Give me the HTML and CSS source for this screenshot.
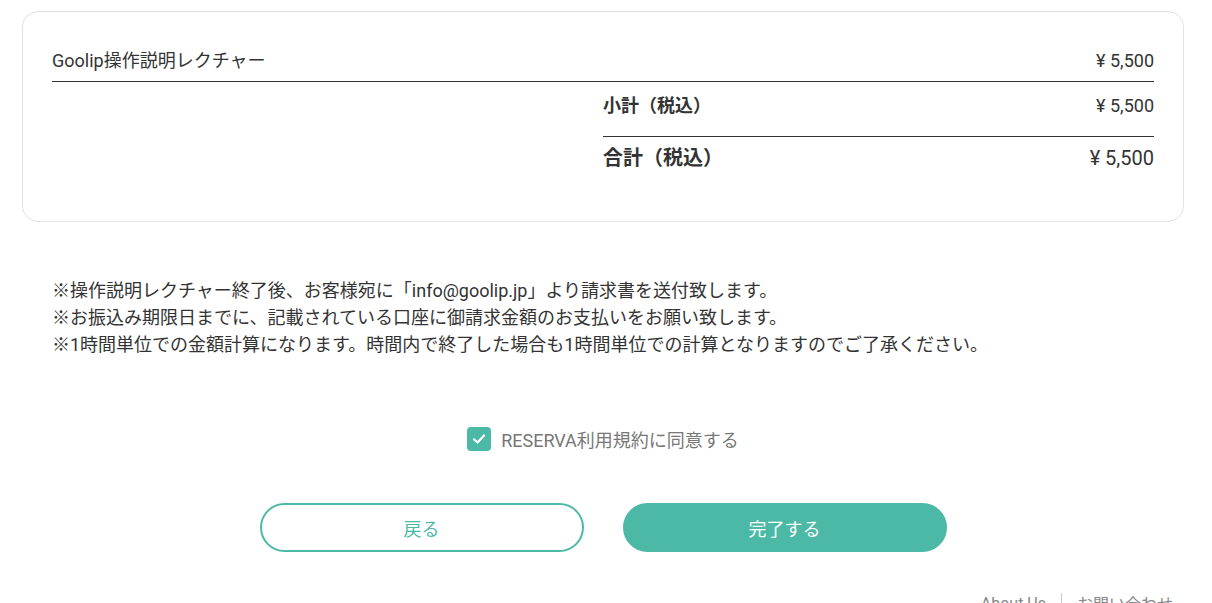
FILE: index.html
```html
<!DOCTYPE html>
<html lang="ja">
<head>
  <meta charset="UTF-8">
  <meta name="viewport" content="width=device-width, initial-scale=1.0">
  <title>予約確認</title>
  <link rel="stylesheet" href="styles.css">
</head>
<body>
<div class="page">
  <div class="card">
    <div class="item-row">
      <span>Goolip操作説明レクチャー</span>
      <span>¥ 5,500</span>
    </div>
    <div class="summary">
      <div class="sub-row">
        <span class="label">小計（税込）</span>
        <span>¥ 5,500</span>
      </div>
      <div class="total-row">
        <span class="label">合計（税込）</span>
        <span>¥ 5,500</span>
      </div>
    </div>
  </div>

  <div class="notes">
    <p>※操作説明レクチャー終了後、お客様宛に「info@goolip.jp」より請求書を送付致します。</p>
    <p>※お振込み期限日までに、記載されている口座に御請求金額のお支払いをお願い致します。</p>
    <p>※1時間単位での金額計算になります。時間内で終了した場合も1時間単位での計算となりますのでご了承ください。</p>
  </div>

  <label class="agree">
    <span class="check">
      <svg width="16" height="16" viewBox="0 0 16 16"><path d="M3 8.3 L6.5 11.5 L13 4.5" fill="none" stroke="#fff" stroke-width="2.2" stroke-linecap="round" stroke-linejoin="round"/></svg>
    </span>
    <span>RESERVA利用規約に同意する</span>
  </label>

  <div class="buttons">
    <button class="btn btn-back">戻る</button>
    <button class="btn btn-done">完了する</button>
  </div>

  <div class="footer">
    <a href="#">About Us</a>
    <span class="sep"></span>
    <a href="#">お問い合わせ</a>
  </div>
</div>
</body>
</html>
```

FILE: styles.css
```css
body {
  margin: 0;
  font-family: Roboto, "Noto Sans CJK JP", sans-serif;
  color: #333;
  background: #fff;
}
.page {
  padding: 11px 28px 0 22px;
}
.card {
  border: 1px solid #e2e2e2;
  border-radius: 16px;
  padding: 37px 29px 50px 29px;
}
.item-row, .sub-row, .total-row {
  display: flex;
  justify-content: space-between;
  font-size: 18px;
  line-height: 24px;
}
.item-row {
  padding-bottom: 8px;
  border-bottom: 1px solid #333;
}
.summary {
  width: 50%;
  margin-left: auto;
}
.sub-row {
  padding: 12px 0 18px;
  border-bottom: 1px solid #333;
}
.total-row {
  padding-top: 8px;
  font-size: 20px;
  line-height: 26px;
}
.label {
  font-weight: bold;
}
.notes {
  margin-top: 55px;
  padding-left: 30px;
  font-size: 18px;
  line-height: 27px;
}
.notes p {
  margin: 0;
}
.agree {
  display: flex;
  justify-content: center;
  align-items: center;
  gap: 10px;
  margin-top: 68px;
  font-size: 18px;
  color: #777;
}
.check {
  width: 24px;
  height: 24px;
  border-radius: 4px;
  background: #4cb9a7;
  display: flex;
  align-items: center;
  justify-content: center;
}
.buttons {
  display: flex;
  justify-content: center;
  gap: 39px;
  margin-top: 51px;
}
.btn {
  width: 324px;
  height: 49px;
  border-radius: 25px;
  border: 2px solid #4cb9a7;
  font-family: Roboto, "Noto Sans CJK JP", sans-serif;
  font-size: 18px;
  cursor: pointer;
}
.btn-back {
  background: #fff;
  color: #4cb9a7;
}
.btn-done {
  background: #4cb9a7;
  color: #fff;
}
.footer {
  display: flex;
  justify-content: flex-end;
  align-items: center;
  gap: 15px;
  margin-top: 39px;
  padding-right: 11px;
  font-size: 16px;
}
.footer a {
  color: #888;
  text-decoration: none;
}
.sep {
  width: 1px;
  height: 20px;
  background: #ccc;
}
```
